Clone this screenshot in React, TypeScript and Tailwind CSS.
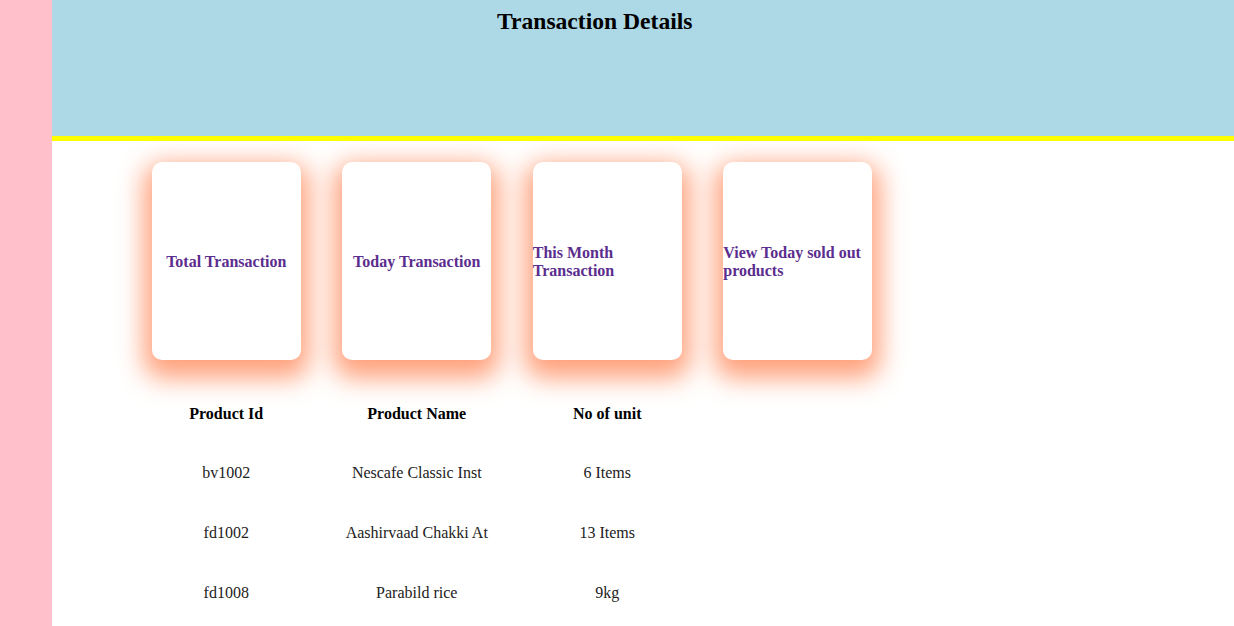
const cards = [
  "Total Transaction",
  "Today Transaction",
  "This Month Transaction",
  "View Today sold out products",
]

const rows = [
  { id: "bv1002", name: "Nescafe Classic Inst", unit: "6 Items" },
  { id: "fd1002", name: "Aashirvaad Chakki At", unit: "13 Items" },
  { id: "fd1008", name: "Parabild rice", unit: "9kg" },
]

export default function App() {
  return (
    <div className="flex min-h-[626px] font-['Liberation_Serif',serif] text-black">
      {/* side bar */}
      <div className="w-[52px] shrink-0 bg-[#ffc0cb]" />

      <div className="flex-1 bg-white">
        <div className="h-[141px] border-b-[5px] border-[#ffff00] bg-[#add8e6] pl-[445px] pt-[6px]">
          <h2 className="text-[23.6px] font-bold leading-[30px]">Transaction Details</h2>
        </div>

        <div className="pl-[79px]">
          <div className="flex pt-[21px]">
            {cards.map((c) => (
              <div key={c} className="flex w-[190.5px] justify-center">
                <div className="flex h-[198px] w-[149px] items-center justify-center rounded-[10px] bg-white pt-[2px] shadow-[0_10px_26px_8px_#ffa07a]">
                  <h3 className="text-[16px] font-bold leading-[18px] text-[#5b2d8e]">{c}</h3>
                </div>
              </div>
            ))}
          </div>

          <table className="mt-[24px] border-collapse text-[16px]">
            <thead>
              <tr className="h-[59px]">
                <th className="w-[190.5px] text-center font-bold">Product Id</th>
                <th className="w-[190.5px] text-center font-bold">Product Name</th>
                <th className="w-[190.5px] text-center font-bold">No of unit</th>
              </tr>
            </thead>
            <tbody className="text-[#222]">
              {rows.map((r) => (
                <tr key={r.id} className="h-[60px]">
                  <td className="text-center">{r.id}</td>
                  <td className="text-center">{r.name}</td>
                  <td className="text-center">{r.unit}</td>
                </tr>
              ))}
            </tbody>
          </table>
        </div>
      </div>
    </div>
  )
}
